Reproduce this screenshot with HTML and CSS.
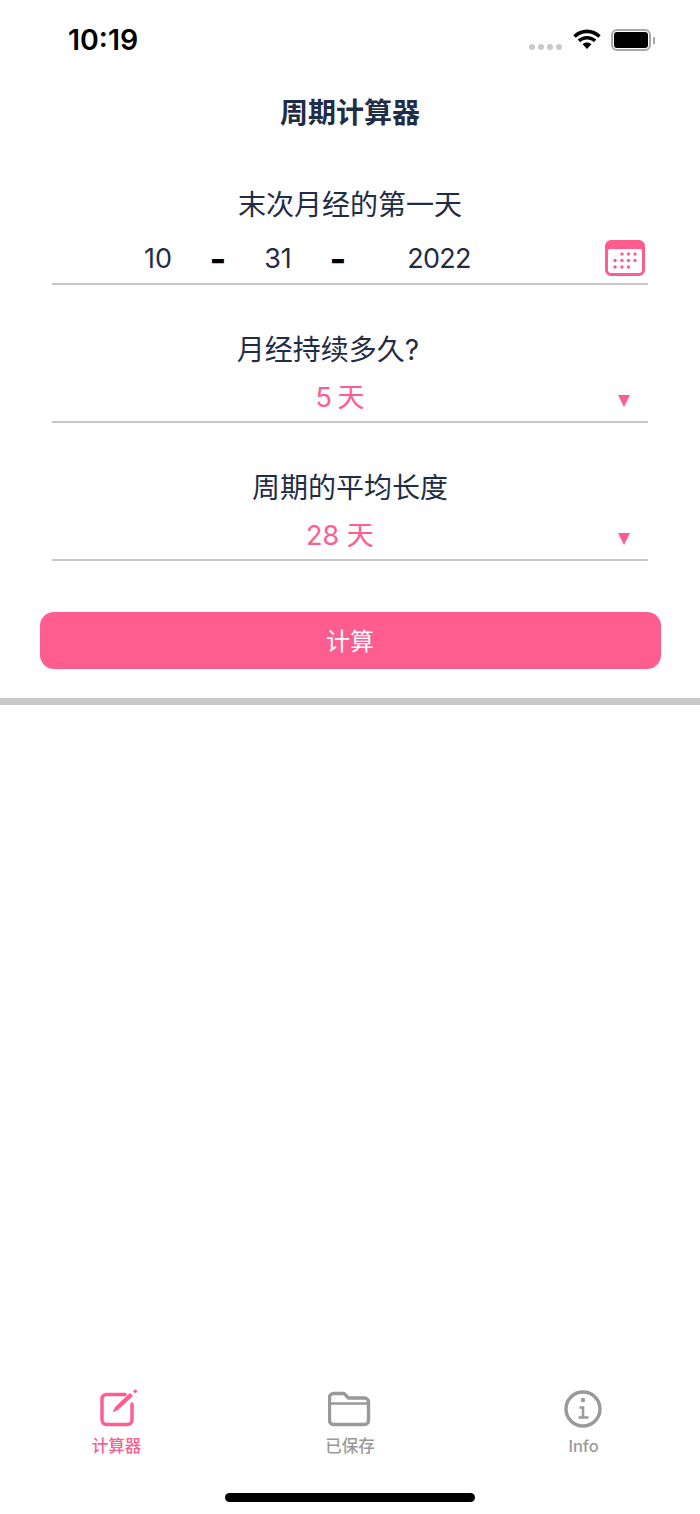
FILE: index.html
```html
<!DOCTYPE html>
<html>
  <head>
    <meta charset="utf-8">
    <title>周期计算器</title>
    <link rel="stylesheet" href="styles.css">
  </head>
  <body>
    <div class="phone">
      <div class="status-bar">
        <span class="clock">10:19</span>
        <div class="status-icons">
          <div class="signal"><i></i><i></i><i></i><i></i></div>
          <svg class="wifi" width="28" height="21" viewBox="1 0.500 26 19">
            <path d="M14 4.200c4.100 0 7.800 1.600 10.500 4.200l2.200-2.400C23.400 2.800 18.900 .8 14 .8S4.600 2.800 1.300 6l2.200 2.400C6.200 5.800 9.900 4.200 14 4.200z"/>
            <path d="M14 10c2.500 0 4.700 1 6.400 2.500l2.200-2.400C20.300 8 17.300 6.700 14 6.700S7.700 8 5.400 10.100l2.200 2.400C9.300 11 11.500 10 14 10z"/>
            <path d="M14 12.700c-1.600 0-3 .6-4.100 1.600L14 18.800l4.100-4.500c-1.100-1-2.500-1.600-4.100-1.600z"/>
          </svg>
          <div class="battery"><div class="battery-fill"></div></div>
          <div class="battery-cap"></div>
        </div>
      </div>

      <h1 class="title">周期计算器</h1>

      <div class="field field-date">
        <div class="field-label">末次月经的第一天</div>
        <div class="date-row">
          <span class="date-part part-month">10</span>
          <span class="date-sep">-</span>
          <span class="date-part part-day">31</span>
          <span class="date-sep">-</span>
          <span class="date-part part-year">2022</span>
          <svg class="calendar" width="40" height="36" viewBox="0 0 40 36">
            <path fill-rule="evenodd" fill="#ff5c8f" d="M6 0h28a6 6 0 0 1 6 6v24a6 6 0 0 1-6 6H6a6 6 0 0 1-6-6V6a6 6 0 0 1 6-6zM5 9a2 2 0 0 0-2 2v19a3 3 0 0 0 3 3h28a3 3 0 0 0 3-3V11a2 2 0 0 0-2-2z"/>
            <g fill="#ff5c8f">
              <circle cx="17" cy="14" r="1.700"/><circle cx="23.500" cy="14" r="1.700"/><circle cx="30" cy="14" r="1.700"/>
              <circle cx="10" cy="20.500" r="1.700"/><circle cx="17" cy="20.500" r="1.700"/><circle cx="23.500" cy="20.500" r="1.700"/><circle cx="30" cy="20.500" r="1.700"/>
              <circle cx="10" cy="27" r="1.700"/><circle cx="17" cy="27" r="1.700"/><circle cx="23.500" cy="27" r="1.700"/>
            </g>
          </svg>
        </div>
      </div>

      <div class="field field-select">
        <div class="field-label label-offset">月经持续多久?</div>
        <div class="select-row">
          <span class="select-value value-short">5 天</span>
          <span class="select-arrow"></span>
        </div>
      </div>

      <div class="field field-select">
        <div class="field-label">周期的平均长度</div>
        <div class="select-row">
          <span class="select-value">28 天</span>
          <span class="select-arrow"></span>
        </div>
      </div>

      <div class="action">
        <button class="calc-btn" type="button">计算</button>
      </div>
      <div class="divider"></div>

      <div class="spacer"></div>

      <div class="tabs">
        <div class="tab tab-active">
          <svg width="40" height="40" viewBox="0 0 40 40" fill="none" stroke="#ff5c8f" stroke-width="3.400">
            <path stroke-linecap="round" d="M28 5.500H9.500A4.500 4.500 0 0 0 5 10v21a4.500 4.500 0 0 0 4.500 4.500h21a4.500 4.500 0 0 0 4.500-4.500V15"/>
            <path fill="#ff5c8f" stroke="none" d="M15.500 23.500L18.500 17.500L33 4L36 7L21 21z"/>
            <circle cx="38.200" cy="2.200" r="1.800" fill="#ff5c8f" stroke="none"/>
          </svg>
          <span>计算器</span>
        </div>
        <div class="tab">
          <svg width="44" height="40" viewBox="0 0 44 40" fill="none" stroke="#999" stroke-width="3.400" stroke-linejoin="round">
            <path d="M1.500 8.500a4 4 0 0 1 4-4h10.500l4.500 4.500h16a4 4 0 0 1 4 4v18.500a4 4 0 0 1-4 4h-31a4 4 0 0 1-4-4z"/>
            <path d="M1.500 14.500h39" stroke-width="2.500"/>
          </svg>
          <span>已保存</span>
        </div>
        <div class="tab">
          <svg width="40" height="40" viewBox="0 0 40 40" fill="none" stroke="#999">
            <circle cx="19" cy="20" r="17" stroke-width="3.400"/>
            <circle cx="19" cy="11" r="2.200" fill="#999" stroke="none"/>
            <path d="M15.500 18.500h3.500V28.500M14.500 28.500h10" stroke-width="2.600"/>
          </svg>
          <span>Info</span>
        </div>
      </div>
      <div class="home-bar"><div class="home-indicator"></div></div>
    </div>
  </body>
</html>
```

FILE: styles.css
```css
html, body {
  margin: 0;
  padding: 0;
  background: #fff;
}
.phone {
  width: 700px;
  height: 1514px;
  display: flex;
  flex-direction: column;
  font-family: Inter, "Noto Sans CJK SC", sans-serif;
  color: #1f2d47;
}

/* status bar */
.status-bar {
  height: 80px;
  display: flex;
  justify-content: space-between;
  align-items: center;
  padding: 0 45px 0 68px;
  box-sizing: border-box;
}
.clock {
  font-size: 28.500px;
  font-weight: 600;
  line-height: 80px;
  height: 80px;
  color: #000;
}
.status-icons {
  display: flex;
  align-items: center;
}
.signal {
  display: flex;
  gap: 3px;
  margin-top: 13px;
  margin-right: 11px;
}
.signal i {
  width: 6px;
  height: 6px;
  border-radius: 50%;
  background: #c9c9c9;
}
.wifi {
  margin-right: 10px;
  margin-bottom: 2px;
}
.battery {
  width: 34px;
  height: 16px;
  border: 2px solid #a8a8a8;
  border-radius: 6px;
  padding: 1px;
  box-sizing: content-box;
}
.battery-fill {
  height: 100%;
  background: #000;
  border-radius: 3px;
}
.battery-cap {
  width: 2px;
  height: 7px;
  background: #a8a8a8;
  margin-left: 2px;
}

.title {
  margin: 0;
  height: 66px;
  line-height: 66px;
  text-align: center;
  font-size: 28px;
  font-weight: 700;
}

/* form fields */
.field {
  margin: 0 52px;
  border-bottom: 2px solid #c8c8c8;
}
.field-label {
  text-align: center;
  font-size: 28px;
  line-height: 36px;
}
.label-offset {
  padding-right: 44px;
}
.field-date {
  margin-top: 41px;
}
.field-date .field-label {
  margin-bottom: 9px;
}
.date-row {
  height: 51px;
  padding-top: 2px;
  box-sizing: border-box;
  display: flex;
  align-items: center;
  font-size: 27px;
  position: relative;
}
.date-part, .date-sep {
  text-align: center;
}
.part-month {
  width: 50px;
  margin-left: 81px;
}
.part-day {
  width: 50px;
}
.part-year {
  width: 90px;
  margin-left: 21px;
  letter-spacing: -0.700px;
}
.date-sep {
  width: 70px;
  font-size: 36px;
  font-weight: 700;
  color: #000;
}
.calendar {
  position: absolute;
  right: 3px;
  top: 8px;
}
.field-select {
  margin-top: 47px;
}
.select-row {
  height: 53px;
  padding: 2px 20px 0 0;
  box-sizing: border-box;
  display: flex;
  align-items: center;
  justify-content: center;
  position: relative;
  color: #ff5c8f;
  font-size: 27px;
}
.value-short {
  word-spacing: -2px;
}
.select-arrow {
  position: absolute;
  right: 18px;
  top: 27px;
  width: 0;
  height: 0;
  border-left: 6px solid transparent;
  border-right: 6px solid transparent;
  border-top: 12px solid #ff5c8f;
}

.action {
  margin: 51px 39.500px 0 39.500px;
}
.calc-btn {
  display: block;
  width: 100%;
  height: 57px;
  border: 0;
  border-radius: 14px;
  padding: 0 0 3px;
  background: #ff5c8f;
  color: #fff;
  font-family: inherit;
  font-size: 24px;
}
.divider {
  margin-top: 29px;
  height: 7px;
  background: #c8c8c8;
}
.spacer {
  flex: 1;
}

/* bottom tabs */
.tabs {
  display: flex;
  justify-content: space-between;
  height: 82px;
}
.tab {
  width: 233px;
  display: flex;
  flex-direction: column;
  align-items: center;
  color: #999;
  font-size: 16.500px;
  font-weight: 500;
}
.tab span {
  margin-top: 7px;
  line-height: 20px;
}
.tab-active {
  color: #ff5c8f;
}
.home-bar {
  height: 43px;
  display: flex;
  justify-content: center;
  align-items: flex-start;
  padding-top: 22px;
  box-sizing: border-box;
}
.home-indicator {
  width: 250px;
  height: 9px;
  border-radius: 5px;
  background: #000;
}
```
